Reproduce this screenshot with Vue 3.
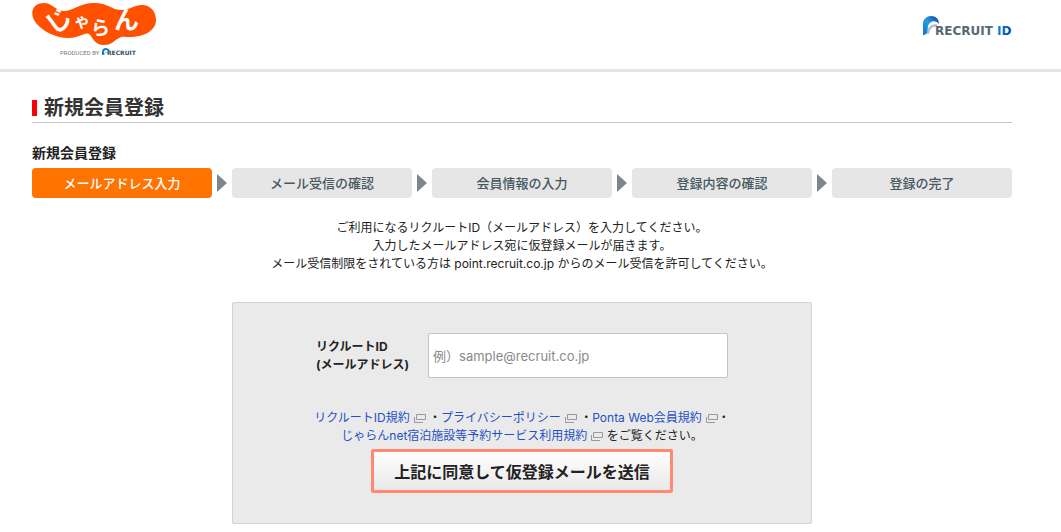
<script setup>
import { ref } from 'vue'

const email = ref('')
const steps = [
  'メールアドレス入力',
  'メール受信の確認',
  '会員情報の入力',
  '登録内容の確認',
  '登録の完了',
]
</script>

<template>
  <header class="header">
    <div class="container header-inner">
      <a class="brand" href="#" aria-label="じゃらん">
        <svg width="124" height="60" viewBox="0 0 124 60">
          <path
            d="M12 3C20 3 24 11 32 11C41 11 48 3 62 3C76 3 80 10 89 10C97 10 103 5 110 5C119 5 124 12 124 20C124 31 111 37 98 37C92 37 90 36 87 38C82 40 81 45 72 45C62 45 61 37 57 34C53 32 47 38 37 38C22 38 11 31 4 23C-3 14 0 3 12 3Z"
            fill="#ff5000"
          />
          <g class="brand-name">
            <text x="14" y="30" font-size="25" transform="rotate(-38 26 21)">じ</text>
            <text x="42" y="27" font-size="16">ゃ</text>
            <text x="59" y="35" font-size="19">ら</text>
            <text x="82" y="29" font-size="25">ん</text>
          </g>
          <text class="produced" x="28" y="55">PRODUCED BY</text>
          <path d="M71 55V52Q71 49 74 49Q76 49 77 51" fill="none" stroke="#1280c8" stroke-width="2" />
          <path d="M72 55Q72 52 76 52" fill="none" stroke="#a5bccb" stroke-width="1" />
          <text class="maker" x="75" y="55">RECRUIT</text>
        </svg>
      </a>
      <a class="recruit" href="#" aria-label="RECRUIT ID">
        <svg width="90" height="28" viewBox="0 0 90 28">
          <defs>
            <linearGradient id="swoosh" x1="0" y1="1" x2="1" y2="0">
              <stop offset="0" stop-color="#0876d4" />
              <stop offset="0.5" stop-color="#279be4" />
              <stop offset="1" stop-color="#0a3f9e" />
            </linearGradient>
            <linearGradient id="idmark">
              <stop offset="0" stop-color="#0a8adb" />
              <stop offset="1" stop-color="#0a3f9e" />
            </linearGradient>
          </defs>
          <path d="M5 18C4 13 8 8 15 8V11C9 10 8 14 7 18Z" fill="#b7bfc5" />
          <path d="M1 19V8C1 3 5 0 9 0C14 0 17 3 17 8C14 4 8 4 6 10L5 17Q4 19 1 19Z" fill="url(#swoosh)" />
          <text class="recruit-name" x="13" y="19">RECRUIT</text>
          <text class="recruit-name" x="75" y="19" fill="url(#idmark)">ID</text>
        </svg>
      </a>
    </div>
  </header>

  <main class="main">
    <div class="container">
      <h1 class="title">新規会員登録</h1>
      <h2 class="subtitle">新規会員登録</h2>

      <ol class="steps">
        <li v-for="(step, i) in steps" :key="step" class="step" :class="{ current: i === 0 }">
          {{ step }}
        </li>
      </ol>

      <p class="lead">
        ご利用になるリクルートID（メールアドレス）を入力してください。<br />
        入力したメールアドレス宛に仮登録メールが届きます。<br />
        メール受信制限をされている方は point.recruit.co.jp からのメール受信を許可してください。
      </p>

      <form class="panel" @submit.prevent>
        <div class="field">
          <label for="email">リクルートID<br />(メールアドレス)</label>
          <input id="email" v-model="email" type="email" placeholder="例）sample@recruit.co.jp" />
        </div>

        <p class="terms">
          <a href="#">リクルートID規約<svg class="ext" viewBox="0 0 12 9"><path d="M2.500.5H11.500V5.500H2.500ZM.5 3V8.500H9" /></svg></a>
          ・<a href="#">プライバシーポリシー<svg class="ext" viewBox="0 0 12 9"><path d="M2.500.5H11.500V5.500H2.500ZM.5 3V8.500H9" /></svg></a>
          ・<a href="#">Ponta Web会員規約<svg class="ext" viewBox="0 0 12 9"><path d="M2.500.5H11.500V5.500H2.500ZM.5 3V8.500H9" /></svg></a>・<br />
          <a href="#">じゃらんnet宿泊施設等予約サービス利用規約<svg class="ext" viewBox="0 0 12 9"><path d="M2.500.5H11.500V5.500H2.500ZM.5 3V8.500H9" /></svg></a>
          をご覧ください。
        </p>

        <button class="submit" type="submit">上記に同意して仮登録メールを送信</button>
      </form>
    </div>
  </main>
</template>

<style>
body {
  background: #fff;
  color: #222;
  font-family: Inter, 'Noto Sans CJK JP', sans-serif;
  font-size: 12px;
  line-height: 18px;
}
</style>

<style scoped>
.header {
  border-bottom: 3px solid #e5e5e5;
  padding-right: 17px;
}

.main {
  padding: 25px 17px 8px 0;
}

.container {
  max-width: 980px;
  margin: 0 auto;
}

.header-inner {
  display: flex;
  justify-content: space-between;
  align-items: flex-start;
  height: 69px;
}

.brand svg,
.recruit svg {
  display: block;
}

.recruit {
  margin-top: 16px;
}

.brand-name {
  fill: #fff;
  font-weight: 700;
}

.produced {
  fill: #777;
  font: 400 6px 'Liberation Sans Narrow', 'Roboto', sans-serif;
}

.maker {
  fill: #34505f;
  font: 700 6px 'DejaVu Sans', sans-serif;
}

.recruit-name {
  font: 700 12px 'DejaVu Sans', sans-serif;
}

.recruit-name:not([fill]) {
  fill: #566872;
}

.title {
  display: flex;
  align-items: center;
  gap: 7px;
  margin: 0;
  padding-bottom: 3px;
  border-bottom: 1px solid #c4c4c4;
  font-size: 20px;
  line-height: 22px;
  color: #333;
}

.title::before {
  content: '';
  width: 5px;
  height: 16px;
  background: #f00;
}

.subtitle {
  margin: 20px 0 5px;
  font-size: 14px;
  line-height: 20px;
}

.steps {
  display: flex;
  gap: 20px;
  margin: 0;
  padding: 0;
  list-style: none;
}

.step {
  position: relative;
  flex: 1;
  border-radius: 4px;
  background: #e6e6e6;
  color: #475960;
  font-size: 13px;
  font-weight: 500;
  line-height: 30px;
  text-align: center;
}

.step.current {
  background: #ff7300;
  color: #fff;
}

.step:not(:last-child)::after {
  content: '';
  position: absolute;
  top: 6px;
  left: calc(100% + 5px);
  border: solid transparent;
  border-width: 9px 0 9px 10px;
  border-left-color: #7f878d;
}

.lead {
  margin: 21px 0 29px;
  text-align: center;
}

.panel {
  box-sizing: border-box;
  max-width: 580px;
  margin: 0 auto;
  padding: 30px 20px;
  border: 1px solid #d3d3d3;
  border-radius: 2px;
  background: #eaeaea;
  text-align: center;
}

.field {
  display: flex;
  justify-content: center;
  align-items: center;
  gap: 19px;
}

.field label {
  font-weight: 700;
  text-align: left;
}

.field input {
  box-sizing: border-box;
  width: 300px;
  height: 45px;
  padding: 0 4px;
  border: 1px solid #c3c3c3;
  border-radius: 2px;
  background: #fff;
  font: 13px Inter, 'Noto Sans CJK JP', sans-serif;
}

.field input::placeholder {
  color: #8a8a8a;
}

.terms {
  margin: 31px 0 4px;
}

.terms a {
  color: #1f50c4;
  text-decoration: none;
}

.ext {
  width: 12px;
  height: 9px;
  margin: 0 0 0 4px;
  vertical-align: -1px;
  fill: none;
  stroke: #999;
}

.submit {
  padding: 7px 20px;
  border: 3px solid #ff8a70;
  border-radius: 2px;
  background: linear-gradient(#fff, #e8e8e8);
  color: #222;
  font: 700 16px/24px 'Noto Sans CJK JP', sans-serif;
}
</style>
